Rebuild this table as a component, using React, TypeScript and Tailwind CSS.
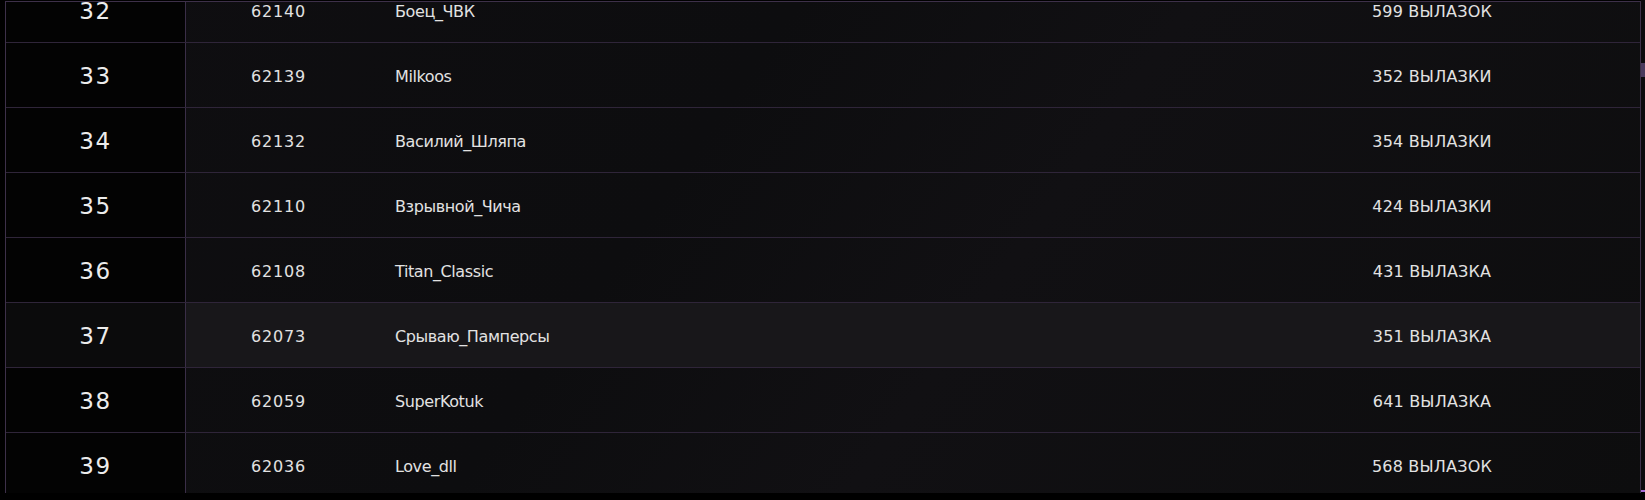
import React from 'react';

type Row = {
  rank: number;
  id: number;
  name: string;
  sorties: string;
};

const rows: Row[] = [
  { rank: 32, id: 62140, name: 'Боец_ЧВК', sorties: '599 ВЫЛАЗОК' },
  { rank: 33, id: 62139, name: 'Milkoos', sorties: '352 ВЫЛАЗКИ' },
  { rank: 34, id: 62132, name: 'Василий_Шляпа', sorties: '354 ВЫЛАЗКИ' },
  { rank: 35, id: 62110, name: 'Взрывной_Чича', sorties: '424 ВЫЛАЗКИ' },
  { rank: 36, id: 62108, name: 'Titan_Classic', sorties: '431 ВЫЛАЗКА' },
  { rank: 37, id: 62073, name: 'Срываю_Памперсы', sorties: '351 ВЫЛАЗКА' },
  { rank: 38, id: 62059, name: 'SuperKotuk', sorties: '641 ВЫЛАЗКА' },
  { rank: 39, id: 62036, name: 'Love_dll', sorties: '568 ВЫЛАЗОК' },
];

// row 37 is under the cursor in the shot
const HOVERED = 37;

function LeaderRow({ row }: { row: Row }) {
  const hovered = row.rank === HOVERED;
  return (
    <div
      className={
        hovered
          ? 'grid grid-cols-[180px_185px_1fr_416px] h-[65px] border-b border-[#2f2539] bg-[#18171a]'
          : 'grid grid-cols-[180px_185px_1fr_416px] h-[65px] border-b border-[#2f2539]'
      }
    >
      <div
        className={
          hovered
            ? 'flex items-center justify-center pt-[2px] border-r border-[#3a2e47] bg-[#0b0b0c] text-[23px] tracking-[1.5px] text-[#ececec]'
            : 'flex items-center justify-center pt-[2px] border-r border-[#3a2e47] bg-[#030303] text-[23px] tracking-[1.5px] text-[#ececec]'
        }
      >
        {row.rank}
      </div>
      <div className="flex items-center justify-center pt-[4px] text-[16px] tracking-[0.8px] text-[#e2e2e2]">
        {row.id}
      </div>
      <div className="flex items-center pl-[24px] pt-[4px] text-[16px] tracking-[-0.4px] text-[#e2e2e2]">
        {row.name}
      </div>
      <div className="flex items-center justify-center pt-[4px] text-[16px] tracking-[0.2px] text-[#e2e2e2]">
        {row.sorties}
      </div>
    </div>
  );
}

export default function App() {
  return (
    <div
      className="w-[1645px] h-[500px] bg-black overflow-hidden"
      style={{ fontFamily: '"DejaVu Sans", "Noto Sans", sans-serif' }}
    >
      <div className="flex h-[492px] pl-[5px]">
        {/* Table */}
        <div className="flex-1 h-full overflow-hidden border-l border-r border-t border-[#3d3049] bg-[#0e0e10] bg-[linear-gradient(125deg,#0f0e11_0%,#0d0d0f_40%,#111013_60%,#0d0d0e_100%)] mt-px">
          <div className="-mt-[24px]">
            {rows.map((row) => (
              <LeaderRow key={row.rank} row={row} />
            ))}
          </div>
        </div>

        {/* Scrollbar */}
        <div className="w-[4px] h-full flex flex-col bg-[#0b090d]">
          <div className="h-[63px]" />
          <div className="h-[14px] bg-[#4a3a5e]" />
          <div className="flex-1" />
          <div className="h-[2px] bg-[#a56bd6]" />
        </div>
      </div>
    </div>
  );
}
